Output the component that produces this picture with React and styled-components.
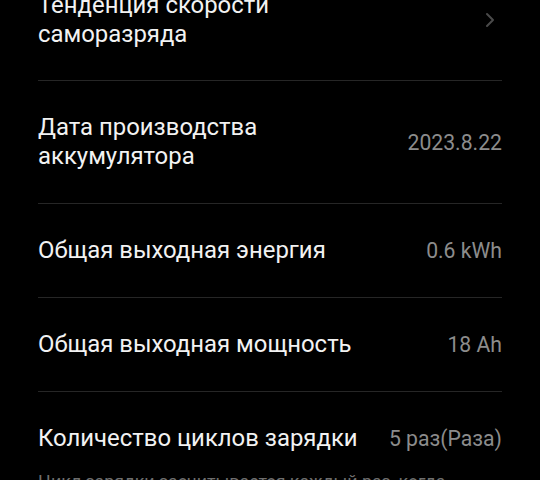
import styled, { createGlobalStyle } from "styled-components";

const GlobalStyle = createGlobalStyle`
  html, body {
    margin: 0;
    padding: 0;
    background: #000;
    overflow: hidden;
  }
  body {
    font-family: Roboto, "Noto Sans", sans-serif;
  }
`;

const Screen = styled.div`
  width: 540px;
  height: 480px;
  overflow: hidden;
  background: #000;
`;

const List = styled.div`
  margin-top: -41px;
  padding: 0 38px;
  display: flex;
  flex-direction: column;
`;

const Row = styled.div`
  display: flex;
  align-items: center;
  justify-content: space-between;
  gap: 24px;
  padding: ${(p) => (p.$last ? "32px 0 16px" : "32px 0")};
  border-bottom: ${(p) => (p.$last ? "none" : "1px solid #262626")};
`;

const Title = styled.div`
  color: #f2f2f2;
  font-size: 23.9px;
  line-height: 28.7px;
  max-width: ${(p) => (p.$narrow ? "260px" : "none")};
`;

const Value = styled.div`
  color: #8c8c8c;
  font-size: 21.2px;
  line-height: 29px;
  white-space: nowrap;
  flex-shrink: 0;
`;

const Chevron = styled.svg`
  width: 16px;
  height: 20px;
  margin-right: 4px;
  flex-shrink: 0;
`;

const Note = styled.div`
  color: #6e6e6e;
  font-size: 17.8px;
  line-height: 26px;
`;

const rows = [
  { title: "Тенденция скорости саморазряда", arrow: true, narrow: true },
  { title: "Дата производства аккумулятора", value: "2023.8.22", narrow: true },
  { title: "Общая выходная энергия", value: "0.6 kWh" },
  { title: "Общая выходная мощность", value: "18 Ah" },
  { title: "Количество циклов зарядки", value: "5 раз(Раза)", last: true },
];

export default function App() {
  return (
    <>
      <GlobalStyle />
      <Screen>
        <List>
          {rows.map((r) => (
            <Row key={r.title} $last={r.last}>
              <Title $narrow={r.narrow}>{r.title}</Title>
              {r.arrow ? (
                <Chevron viewBox="0 0 16 20">
                  <path d="M5 4l6 6-6 6" fill="none" stroke="#4a4a4a" strokeWidth="2" strokeLinecap="round" strokeLinejoin="round" />
                </Chevron>
              ) : (
                <Value>{r.value}</Value>
              )}
            </Row>
          ))}
          <Note>Цикл зарядки засчитывается каждый раз, когда накопленный заряд достигает 100%.</Note>
        </List>
      </Screen>
    </>
  );
}
